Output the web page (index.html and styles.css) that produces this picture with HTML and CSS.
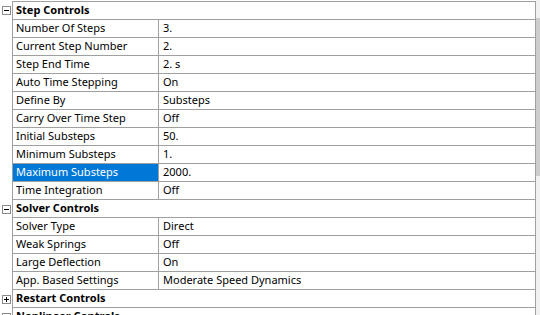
FILE: index.html
```html
<!DOCTYPE html>
<html lang="en">
<head>
    <meta charset="UTF-8">
    <title>Details</title>
    <link rel="stylesheet" href="styles.css">
</head>
<body>
    <div class="view">
        <div class="grid">
            <!-- Step Controls -->
            <div class="row group">
                <div class="gutter"><svg class="toggle" width="9" height="9" viewBox="0 0 9 9"><rect x="0.5" y="0.5" width="8" height="8" fill="#fff" stroke="#8c8c8c"/><path d="M2 4.5h5" stroke="#000"/></svg></div>
                <div class="cell head">Step Controls</div>
            </div>
            <div class="row"><div class="gutter"></div><div class="cell name">Number Of Steps</div><div class="cell value">3.</div></div>
            <div class="row"><div class="gutter"></div><div class="cell name">Current Step Number</div><div class="cell value">2.</div></div>
            <div class="row"><div class="gutter"></div><div class="cell name">Step End Time</div><div class="cell value">2. s</div></div>
            <div class="row"><div class="gutter"></div><div class="cell name">Auto Time Stepping</div><div class="cell value">On</div></div>
            <div class="row"><div class="gutter"></div><div class="cell name">Define By</div><div class="cell value">Substeps</div></div>
            <div class="row"><div class="gutter"></div><div class="cell name">Carry Over Time Step</div><div class="cell value">Off</div></div>
            <div class="row"><div class="gutter"></div><div class="cell name">Initial Substeps</div><div class="cell value">50.</div></div>
            <div class="row"><div class="gutter"></div><div class="cell name">Minimum Substeps</div><div class="cell value">1.</div></div>
            <div class="row"><div class="gutter"></div><div class="cell name selected">Maximum Substeps</div><div class="cell value">2000.</div></div>
            <div class="row"><div class="gutter"></div><div class="cell name">Time Integration</div><div class="cell value">Off</div></div>

            <!-- Solver Controls -->
            <div class="row group">
                <div class="gutter"><svg class="toggle" width="9" height="9" viewBox="0 0 9 9"><rect x="0.5" y="0.5" width="8" height="8" fill="#fff" stroke="#8c8c8c"/><path d="M2 4.5h5" stroke="#000"/></svg></div>
                <div class="cell head">Solver Controls</div>
            </div>
            <div class="row"><div class="gutter"></div><div class="cell name">Solver Type</div><div class="cell value">Direct</div></div>
            <div class="row"><div class="gutter"></div><div class="cell name">Weak Springs</div><div class="cell value">Off</div></div>
            <div class="row"><div class="gutter"></div><div class="cell name">Large Deflection</div><div class="cell value">On</div></div>
            <div class="row"><div class="gutter"></div><div class="cell name">App. Based Settings</div><div class="cell value">Moderate Speed Dynamics</div></div>

            <!-- Restart Controls -->
            <div class="row group">
                <div class="gutter"><svg class="toggle" width="9" height="9" viewBox="0 0 9 9"><rect x="0.5" y="0.5" width="8" height="8" fill="#fff" stroke="#8c8c8c"/><path d="M2 4.5h5M4.5 2v5" stroke="#000"/></svg></div>
                <div class="cell head">Restart Controls</div>
            </div>

            <!-- Nonlinear Controls -->
            <div class="row group">
                <div class="gutter"><svg class="toggle" width="9" height="9" viewBox="0 0 9 9"><rect x="0.5" y="0.5" width="8" height="8" fill="#fff" stroke="#8c8c8c"/><path d="M2 4.5h5" stroke="#000"/></svg></div>
                <div class="cell head">Nonlinear Controls</div>
            </div>
        </div>
        <div class="scrollbar"><div class="thumb"></div></div>
    </div>
</body>
</html>
```

FILE: styles.css
```css
* {
    box-sizing: border-box;
    margin: 0;
    padding: 0;
}

body {
    background: #ffffff;
    font-family: "Noto Sans", "Open Sans", sans-serif;
    font-size: 11px;
    color: #000000;
    overflow: hidden;
    height: 315px;
}

.view {
    display: flex;
    height: 315px;
}

.grid {
    width: 536px;
    padding-top: 1px;
}

/* one line of the details list */
.row {
    display: flex;
    height: 18px;
}

.row:first-child .cell {
    border-top: 1px solid #a0a0a0;
    height: 19px;
}

.row:first-child {
    height: 19px;
}

.gutter {
    width: 12px;
    flex: none;
    display: flex;
    align-items: center;
    padding-left: 2px;
}

.toggle {
    display: block;
}

.cell {
    height: 18px;
    line-height: 15px;
    border-bottom: 1px solid #a0a0a0;
    white-space: nowrap;
    overflow: hidden;
}

.name {
    width: 147px;
    flex: none;
    padding-left: 3px;
    border-left: 1px solid #a0a0a0;
    border-right: 1px solid #a0a0a0;
}

.name.selected {
    background: #0078d7;
    color: #ffffff;
}

.value {
    flex: 1;
    padding-left: 4px;
    border-right: 1px solid #a0a0a0;
}

.head {
    flex: 1;
    padding-left: 3px;
    font-weight: 700;
    border-left: 1px solid #a0a0a0;
    border-right: 1px solid #a0a0a0;
}

.scrollbar {
    flex: 1;
    background: #f0f0f0;
    padding-top: 18px;
}

.thumb {
    height: 158px;
    background: #cdcdcd;
}
```
